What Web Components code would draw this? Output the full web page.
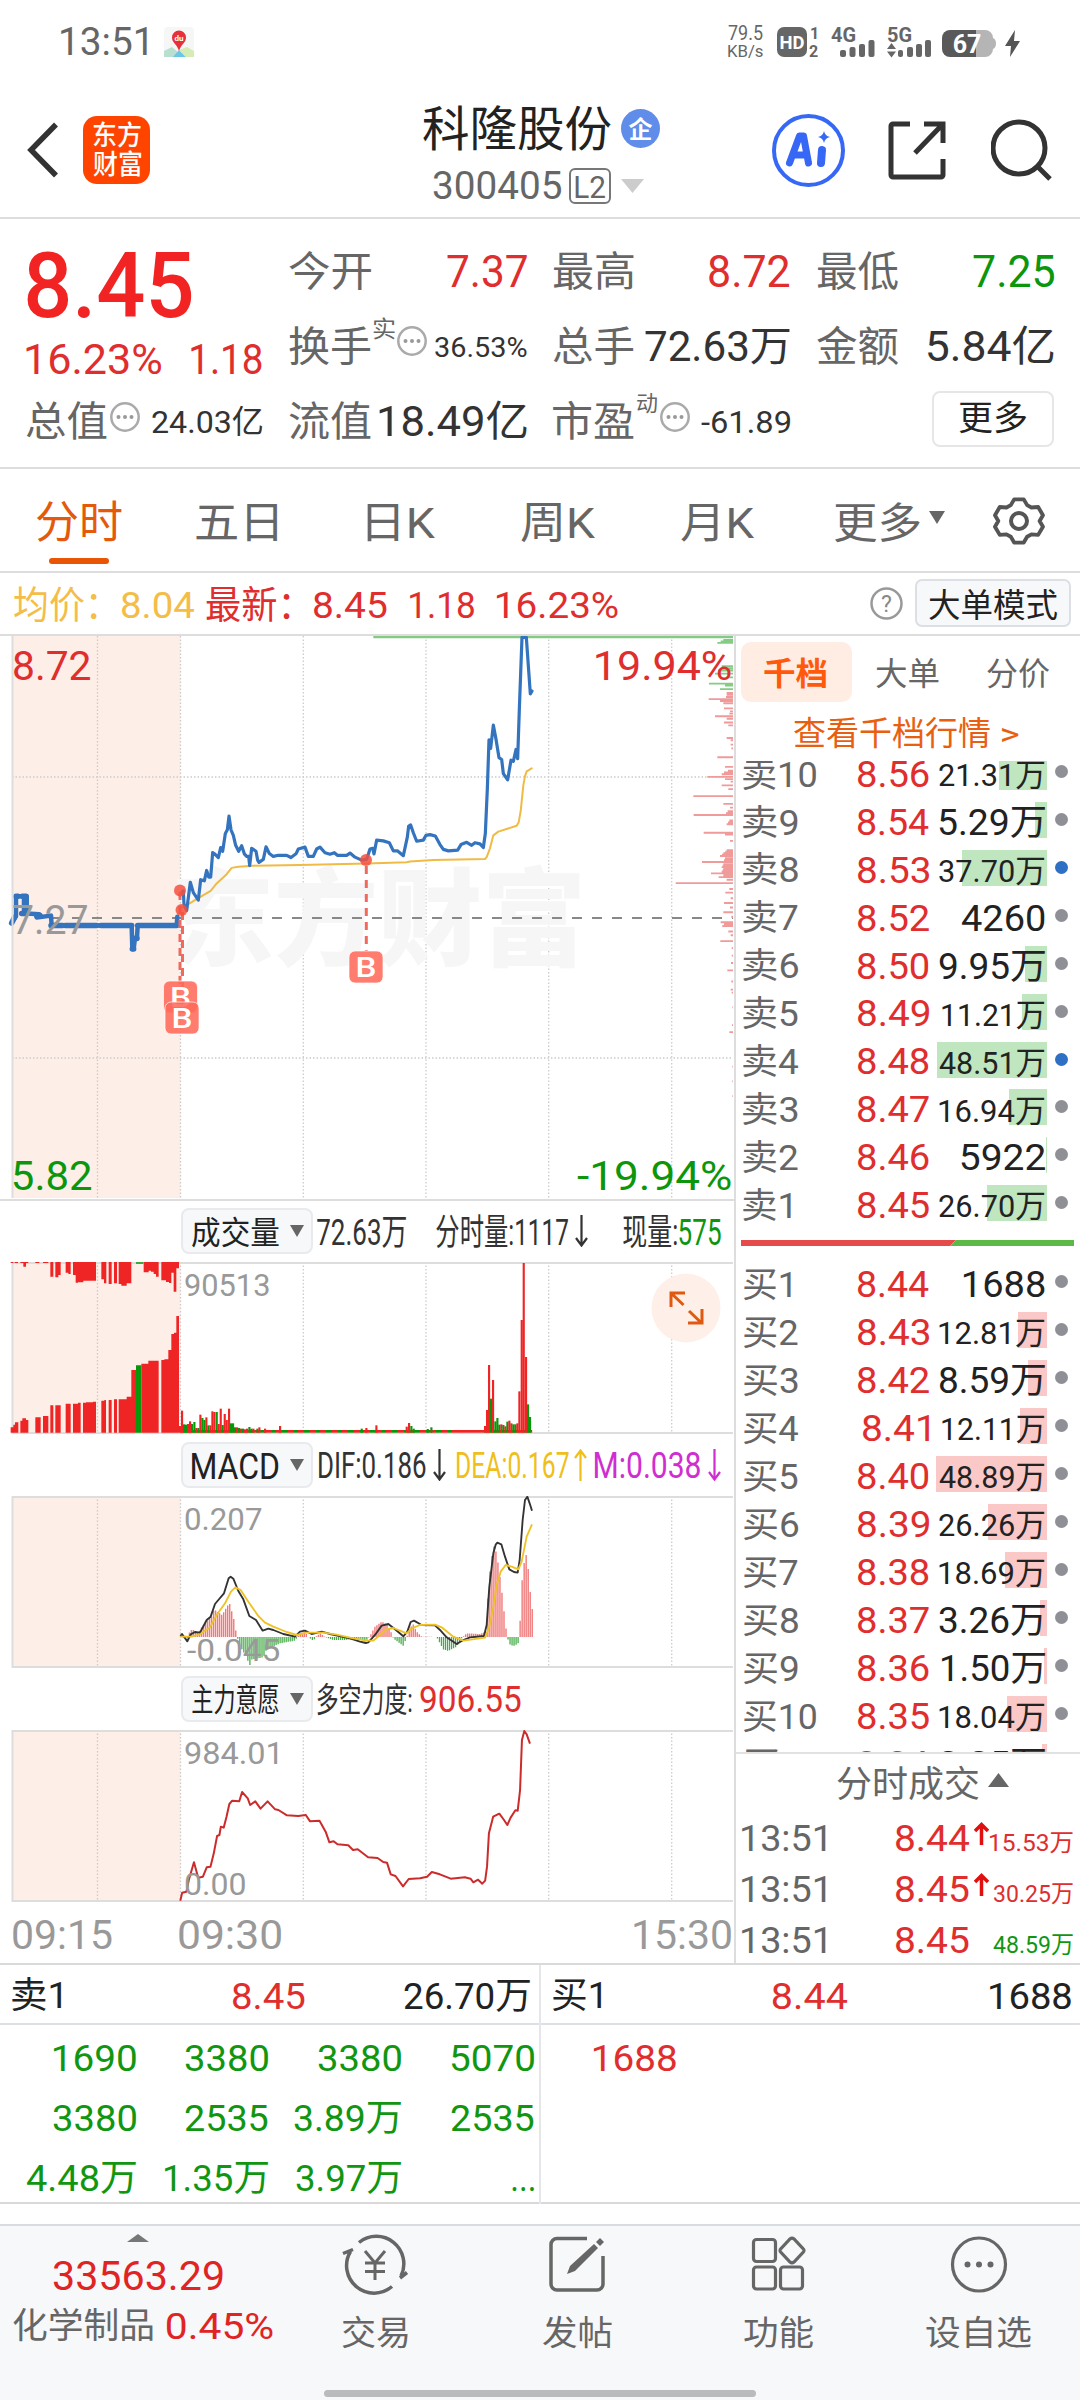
<!DOCTYPE html>
<html lang="zh-CN">
<head>
<meta charset="utf-8">
<title>科隆股份 300405</title>
<style>
html,body{margin:0;padding:0;background:#fff}
body{width:1080px;height:2400px;overflow:hidden;font-family:Roboto,"Noto Sans CJK SC",sans-serif;color:#333}
</style>
</head>
<body>
<stock-app></stock-app>
<script>
const FONT = 'Roboto,"Noto Sans CJK SC",sans-serif';
const RED = '#e02d2d', GREEN = '#119611', GREY = '#666';
const BASE = ':host{display:block;box-sizing:border-box}*{box-sizing:border-box}svg{display:block;flex:none}.r{display:flex;align-items:center}';

function define(name, css, html) {
  customElements.define(name, class extends HTMLElement {
    constructor() { super(); this.attachShadow({ mode: 'open' }); }
    connectedCallback() {
      this.shadowRoot.innerHTML = `<style>${BASE}${css}</style>${typeof html === 'function' ? html(this) : html}`;
    }
  });
}

/* Text whose inked width is set by the w attribute. */
const ctx = document.createElement('canvas').getContext('2d');
customElements.define('fit-text', class extends HTMLElement {
  constructor() { super(); this.attachShadow({ mode: 'open' }); }
  connectedCallback() {
    const w = +this.getAttribute('w'), s = +this.getAttribute('s'), b = this.getAttribute('b') || 400;
    ctx.font = `${b} ${s}px ${FONT}`;
    const m = ctx.measureText(this.textContent);
    const ink = m.actualBoundingBoxLeft + m.actualBoundingBoxRight;
    const k = w / ink;
    this.shadowRoot.innerHTML = `<style>:host{display:block;flex:none;width:${w}px;height:${s * 1.2}px;line-height:${s * 1.2}px;font-size:${s}px;font-weight:${b};color:${this.getAttribute('c') || 'inherit'};white-space:nowrap}
      span{display:inline-block;transform-origin:0 0;transform:translate(${m.actualBoundingBoxLeft * k}px,var(--drop,1px)) scaleX(${k})}</style><span><slot></slot></span>`;
  }
});
const T = (t, w, s, c = '', x = '', b = 400) => `<fit-text w="${w}" s="${s}" c="${c}" b="${b}" style="${x}">${t}</fit-text>`;

define('status-bar', ':host{height:84px;display:flex;align-items:center;padding-left:61px}.net{margin-left:534px;display:flex;flex-direction:column;gap:1px;height:36px;justify-content:center}', `
${T('13:51', 86, 38, GREY)}
<svg style="margin-left:17px" width="30" height="30" viewBox="0 0 30 30"><rect width="30" height="30" rx="4" fill="#f5f7f6"/><path d="M0 24L8 20 15 26 10 30H0z" fill="#b8dfd0"/><path d="M9 30l6-7 7 7z" fill="#6bc6e8"/><path d="M15 23l8-3 7 4v6h-8z" fill="#d5ecb6"/><path d="M15 24C13 17 8 16 8 10.500a7 7 0 0 1 14 0C22 16 17 17 15 24z" fill="#e8303a"/><text x="15" y="14" font-size="8" font-weight="700" fill="#fff" text-anchor="middle">du</text></svg>
<div class="net">${T('79.5', 35, 19.5, GREY, 'height:17px;line-height:17px')}${T('KB/s', 35, 16.5, GREY, 'height:17px;--drop:0px')}</div>
<svg style="margin-left:14px" width="244" height="36" viewBox="777 24 244 36" font-weight="700">
<rect x="777" y="27" width="30" height="30" rx="7" fill="#666"/><text x="792" y="49" font-size="19" fill="#fff" text-anchor="middle" textLength="25" lengthAdjust="spacingAndGlyphs">HD</text>
<g fill="#666"><text x="810" y="39" font-size="16" textLength="9">1</text><text x="809" y="57" font-size="16" textLength="11">2</text>
<text x="831" y="42" font-size="20" textLength="25" lengthAdjust="spacingAndGlyphs">4G</text><text x="887" y="42" font-size="20" textLength="25" lengthAdjust="spacingAndGlyphs">5G</text>
<rect x="840" y="50" width="6" height="7" rx="2"/><rect x="849.500" y="47" width="6" height="10" rx="2"/><rect x="859" y="44" width="6" height="13" rx="2"/><rect x="868.500" y="40" width="6" height="17" rx="2"/>
<path d="M887 49l4.500-6 4.500 6zM887 51.500h9l-4.500 6z"/><rect x="898" y="50" width="5" height="7" rx="2"/><rect x="907" y="47" width="6" height="10" rx="2"/><rect x="916" y="44" width="6" height="13" rx="2"/><rect x="925" y="40" width="6" height="17" rx="2"/></g>
<path d="M976 30h9a8 8 0 0 1 8 8v0c4 1 4 10 0 11a8 8 0 0 1-8 8h-9z" fill="#b5b5b5"/><path d="M950 30h26v27h-26a8 8 0 0 1-8-8V38a8 8 0 0 1 8-8z" fill="#595959"/><text x="967" y="52.500" font-size="25" fill="#fff" text-anchor="middle">67</text>
<path d="M1015 30l-10 16h6l-1 11 10-16h-6z" fill="#555"/></svg>`);

define('app-header', ':host{height:135px;display:flex;align-items:center;padding-left:27px;border-bottom:2px solid #ddd}.logo{margin-left:25px;width:67px;height:68px;border-radius:14px;background:#ff4400;display:flex;flex-direction:column;align-items:center;justify-content:center;gap:0}.ti{margin-left:273px;width:236px;height:100%}.l2{margin-left:8px;width:42px;height:36px;border:2px solid #777;border-radius:6px;display:flex;align-items:center;justify-content:center}', `
<svg width="31" height="56" viewBox="0 0 31 56" fill="none" stroke="#333" stroke-width="5.500"><path d="M29 2.500L4 28l25 25.500"/></svg>
<div class="logo">${T('东方', 48, 27, '#fff', 'height:29px;line-height:29px', 500)}${T('财富', 48, 27, '#fff', 'height:29px;line-height:29px', 500)}</div>
<div class="ti"><div class="r" style="height:86px;padding-top:3px">${T('科隆股份', 188, 48, '#222')}
<svg style="margin-left:10px" width="39" height="39" viewBox="0 0 39 39"><circle cx="19.500" cy="19.500" r="19.500" fill="#5f8de9"/><text x="19.500" y="28.500" font-size="24" font-weight="700" fill="#fff" text-anchor="middle">企</text></svg></div>
<div class="r" style="height:32px;padding-left:10px">${T('300405', 128, 38, GREY)}<div class="l2">${T('L2', 30, 32, GREY)}</div><svg style="margin-left:10px" width="23" height="14"><path d="M0 0h23L11.500 14z" fill="#ccc"/></svg></div></div>
<svg style="margin-left:113px" width="73" height="73" viewBox="0 0 73 73"><circle cx="36.500" cy="36.500" r="34.500" fill="none" stroke="#3668f5" stroke-width="4"/><path d="M17.500 49L27.500 22h4l5 27M22 41h12.500" fill="none" stroke="#3668f5" stroke-width="7" stroke-linejoin="round" stroke-linecap="round"/><path d="M50 36l-1 13" stroke="#3668f5" stroke-width="8" stroke-linecap="round"/><path d="M52 17q1 5 6 6-5 1-6 6-1-5-6-6 5-1 6-6z" fill="#3668f5"/></svg>
<svg style="margin-left:43px" width="58" height="60" viewBox="0 0 58 60" fill="none" stroke="#333" stroke-width="5"><path d="M22 4H5a2 2 0 0 0-2 2v49a2 2 0 0 0 2 2h48a2 2 0 0 0 2-2V39M36 4h19v19M54 5L27 33"/></svg>
<svg style="margin-left:45px" width="61" height="62" viewBox="0 0 61 62" fill="none" stroke="#333" stroke-width="5"><circle cx="28" cy="29" r="26"/><path d="M46 47l13 13"/></svg>`);

define('info-dot', ':host{flex:none}', `<svg width="30" height="30" viewBox="0 0 30 30"><circle cx="15" cy="15" r="13.700" fill="none" stroke="#aaa" stroke-width="2.500"/><g fill="#999"><circle cx="8.500" cy="15" r="2"/><circle cx="15" cy="15" r="2"/><circle cx="21.500" cy="15" r="2"/></g></svg>`);

define('quote-summary', `:host{--drop:1.500px;height:250px;border-bottom:2px solid #ddd;padding:14px 0 0 26px;display:grid;grid-template-columns:236px 238px 237px 240px;column-gap:26.500px}
.row{display:flex;align-items:center;height:75px}.sp{justify-content:space-between}.btn{width:125px;height:56px;border:2px solid #e6e6e6;border-radius:8px;display:flex;align-items:center;justify-content:center;margin:-3px 0 0 115px}.cell{display:flex;align-items:center}`, `
<div><div class="row" style="height:103px">${T('8.45', 165, 91, '#f22323', 'margin-left:1px', 500)}</div>
<div class="row sp" style="height:44px">${T('16.23%', 135, 42, RED)}${T('1.18', 71, 42, RED)}</div>
<div class="row sp" style="height:81px"><div class="cell">${T('总值', 81, 41, GREY)}<info-dot style="margin:-7px 0 0 3px"></info-dot></div>${T('24.03亿', 110, 32, '#333')}</div></div>
<div><div class="row sp">${T('今开', 82, 41, GREY)}${T('7.37', 80, 44, RED)}</div>
<div class="row sp"><div class="cell">${T('换手', 82, 41, GREY)}${T('实', 22, 23, GREY, 'margin:0 2px 36px 2px')}<info-dot style="margin-top:-8px"></info-dot></div>${T('36.53%', 92, 28, '#333')}</div>
<div class="row sp">${T('流值', 82, 41, GREY)}${T('18.49亿', 148, 42, '#333')}</div></div>
<div><div class="row sp">${T('最高', 81, 41, GREY)}${T('8.72', 81, 44, RED)}</div>
<div class="row sp">${T('总手', 81, 41, GREY)}${T('72.63万', 145, 42, '#333')}</div>
<div class="row sp"><div class="cell">${T('市盈', 81, 41, GREY)}${T('动', 20, 22, GREY, 'margin:0 3px 36px 3px')}<info-dot style="margin-top:-7px"></info-dot></div>${T('-61.89', 89, 32, '#333')}</div></div>
<div style="width:237px"><div class="row sp">${T('最低', 81, 41, GREY)}${T('7.25', 81, 44, '#0c960c')}</div>
<div class="row sp">${T('金额', 81, 41, GREY)}${T('5.84亿', 126, 42, '#333')}</div>
<div class="row"><div class="btn">${T('更多', 68, 34, '#222', '--drop:0px')}</div></div></div>`);

define('period-tabs', `:host{--drop:3px;height:104px;border-bottom:2px solid #ddd;display:flex;align-items:center;padding-left:36px;padding-top:2px}.on{position:relative}.on i{position:absolute;left:13px;bottom:-17px;width:60px;height:6px;border-radius:3px;background:#e85505}`, `
<div class="on">${T('分时', 86, 44, '#e35a0c')}<i></i></div>
${T('五日', 81, 43, GREY, 'margin-left:74px')}${T('日K', 68, 43, GREY, 'margin-left:90px')}${T('周K', 74, 43, GREY, 'margin-left:86px')}${T('月K', 73, 43, GREY, 'margin-left:86px')}${T('更多', 86, 42, GREY, 'margin-left:80px')}
<svg style="margin:-6px 0 0 9px" width="16" height="13"><path d="M0 0h16L8 13z" fill="#666"/></svg>
<svg style="margin-left:48px" width="52" height="52" viewBox="0 0 52 52" fill="none" stroke="#555" stroke-width="4" stroke-linejoin="round"><path d="M21 3.500h10l3.500 6 4.500 2.500 7-.5L51 20l-3.500 6L51 32l-5 8.500-7-.5-4.500 2.500-3.500 6H21l-3.500-6L13 40l-7 .5L1 32l3.500-6L1 20l5-8.500 7 .5 4.500-2.500z" transform="translate(1 1) scale(.96)"/><circle cx="26" cy="26" r="8"/></svg>`);

define('average-line', `:host{--drop:3px;height:63px;border-bottom:2px solid #ddd;display:flex;align-items:center;padding-left:14px}.btn{margin-left:12px;width:156px;height:48px;border:2px solid #dcdfe4;border-radius:7px;background:#f7f8fa;display:flex;align-items:center;justify-content:center}`, `
${T('均价：', 83, 38, '#f3bd48')}${T('8.04', 72, 37, '#f3bd48', 'margin-left:25px')}
${T('最新：', 84, 38, RED, 'margin-left:12px')}${T('8.45', 73, 37, RED, 'margin-left:24px')}${T('1.18', 64, 37, RED, 'margin-left:23px')}${T('16.23%', 121, 37, RED, 'margin-left:23px')}
<svg style="margin-left:252px" width="33" height="33" viewBox="0 0 33 33"><circle cx="16.500" cy="16.500" r="15" fill="none" stroke="#999" stroke-width="2.500"/><text x="16.500" y="24.500" font-size="23" fill="#888" text-anchor="middle">?</text></svg>
<div class="btn">${T('大单模式', 128, 33, '#222')}</div>`);

/* ---- charts ---- */
const GRID_X = [97.5, 303.3, 426, 548.7, 671.7];
const grid = (y, h) => `<rect x="12" y="${y}" width="168.500" height="${h}" fill="#fdeee7"/>
<g stroke="#ccc" stroke-width="1.300" stroke-dasharray="1.500 2">${[...GRID_X, 180.5].map(x => `<path d="M${x} ${y}v${h}"/>`).join('')}</g>`;
const frame = (y, h) => `<path d="M12 ${y + 1}H733M12 ${y + h - 1}H733M12.500 ${y}v${h}" stroke="#ddd" stroke-width="2" fill="none"/>`;
const CHART = ':host{position:relative;width:734px}fit-text,expand-button{position:absolute}';
const bars = (list, base, w) => list.map(([x, y, c]) => `<rect x="${x}" y="${Math.min(y, base)}" width="${w}" height="${Math.abs(base - y)}" fill="${c ? '#0a960a' : '#ef2424'}"/>`).join('');

const DEPTH_G = [27,1090,31,1082,35,1072,98,1085,104,1088,110,1075,118,1065,128,1100,145,1047,150,1095,160,1080];
const DEPTH_R = [170,1100,175,1100,181,1098,187,1046,192,1080,198,1090,212,1092,220,1110,226,1108,233,1065,240,1100,250,1092,258,1105,292,1100,298,1112,310,1112,320,1114,344,1072,370,1095,380,1104,385,1092,390,1085,397,1042,403,1095,410,1112,420,1085,430,1105,449,1000,470,1090,480,1110,490,1103,495,1098,500,1001,515,1108,520,1104,525,1100,548,1031,553,1095,570,1110,595,1100,599,1096,603,1090,607,1086,611,1080,617,1095,622,1092,627,1026,633,1090,637,1088,641,1085,645,1090,649,1088,653,1085,658,1053,663,1090,668,1076,675,1100,684,947,700,1108,710,1096,725,1112,738,1092,750,1110,763,1090,775,1114,790,1082,795,1092,800,1087,815,1105,825,1112,841,1081,860,1115,880,1115,900,1113,920,1102,950,1114,972,1112,980,1115,1020,1117,1068,1116,1087,1108,1180,1117,1220,1117,1260,1117];
const depth = (a, c) => { let s = ''; for (let i = 0; i < a.length; i += 2) s += `M${a[i + 1]} ${a[i]}H1119`; return `<path d="${s}" stroke="${c}" stroke-width="5"/>`; };
const badge = (x, y) => `<g><rect x="${x}" y="${y}" width="34" height="32" rx="6" fill="#ff6a5a" fill-opacity=".88" stroke="#fff" stroke-opacity=".7"/><text x="${x + 17}" y="${y + 26}" font-size="27" font-weight="500" fill="#fff" text-anchor="middle" textLength="21" lengthAdjust="spacingAndGlyphs">B</text></g>`;

define('price-chart', CHART + ':host{height:563px}', `
<svg width="734" height="563" viewBox="0 636 734 563">${grid(636, 562)}
<path d="M12 777H733M12 1058H733" stroke="#ccc" stroke-width="1.300" stroke-dasharray="1.500 2"/>
<text x="170" y="957" font-size="106" font-weight="900" fill="#f6f6f6" textLength="416" lengthAdjust="spacingAndGlyphs">东方财富</text>
<path d="M52 918H733" stroke="#888" stroke-width="2" stroke-dasharray="10 10"/>
<g transform="translate(360 630) scale(.33333 .36996)"><path d="M40 19H1119" stroke="#84c984" stroke-width="7"/>${depth(DEPTH_G, '#84cb84')}${depth(DEPTH_R, '#f19a9a')}</g>
<g transform="translate(0 630) scale(.33333 .36996)" fill="none" stroke-linejoin="round" stroke-linecap="round">
<path vector-effect="non-scaling-stroke" stroke="#f0bb45" stroke-width="2" d="M548 750L570 738 600 722 632 705 650 685 680 660 695 643 715 640 760 637 900 635 1100 631 1220 628 1230 626 1300 622 1455 619 1460 614 1470 590 1480 555 1495 545 1550 529 1556 520 1562 490 1570 420 1575 395 1580 382 1595 374"/>
<path vector-effect="non-scaling-stroke" stroke="#3474bf" stroke-width="4.500" d="M35 792L48 774V720H72V766H66M80 720V766L118 768 110 777 153 772 155 799H395L397 862H401L405 832H411L413 799H530L532 775"/>
<path vector-effect="non-scaling-stroke" stroke="#3474bf" stroke-width="5.500" d="M35 792L44 776M48 720H54M67 720H78V766H65M110 772H120M153 799H188M196 799H290M303 799H395M397 862H401M405 834H411M413 799H530"/>
<path vector-effect="non-scaling-stroke" stroke="#3474bf" stroke-width="3.200" d="M540 715L550 705 552 742 560 758 571 682 580 710 595 730 602 675 613 678 620 650 626 668 632 668 638 602 644 605 655 615 662 588 668 598 676 550 682 540 687 503 693 540 700 555 707 582 716 598 725 583 733 605 740 612 746 612 749 637 755 590 768 598 773 622 777 628 790 620 798 586 808 604 820 612 835 609 860 609 873 615 888 605 895 592 915 587 925 612 940 612 950 592 960 587 975 602 990 606 1003 602 1012 609 1040 609 1050 603 1065 614 1085 622 1100 620 1110 592 1118 590 1122 605 1130 568 1150 570 1168 575 1180 597 1192 597 1210 610 1222 560 1226 530 1232 527 1240 548 1250 571 1270 568 1278 555 1290 553 1306 557 1320 580 1330 593 1345 597 1373 595 1383 580 1400 574 1415 582 1425 575 1440 578 1450 588 1456 550 1462 430 1467 297 1472 320 1480 257 1488 295 1497 345 1505 350 1510 388 1523 405 1533 352 1540 355 1548 323 1553 348 1558 215 1566 20H1579L1591 173 1596 165"/></g>
<g stroke="#ef6a5d" stroke-width="3" stroke-dasharray="8 6"><path d="M180 892V984M182.500 912V1004M366.300 866V951"/></g>
<g fill="#f4503f" fill-opacity=".85"><circle cx="180" cy="890.500" r="6"/><circle cx="181.500" cy="910" r="6"/><circle cx="366" cy="860" r="6"/></g>
${badge(163.5, 981)}${badge(165, 1002)}${badge(349, 951)}
<path d="M12.500 636V1198" stroke="#ddd" stroke-width="2"/></svg>
${T('8.72', 76, 40, RED, 'left:14px;top:6px')}${T('19.94%', 135, 40, RED, 'left:596px;top:6px')}
${T('7.27', 74, 40, '#999', 'left:13px;top:260px')}
${T('5.82', 77, 40, '#0c960c', 'left:14px;top:516px')}${T('-19.94%', 154, 40, '#0c960c', 'left:577px;top:516px')}`);

define('indicator-bar', `:host{--drop:2px;height:62px;display:flex;align-items:center;padding-left:181px}.btn{width:132px;height:46px;border:2px solid #e8eaed;border-radius:8px;background:#f7f8fa;display:flex;align-items:center;justify-content:space-between;padding:0 7px 0 9px;margin-right:4px}`,
  el => `<div class="btn">${T(el.getAttribute('name'), 87, +el.getAttribute('s'), '#222')}<svg width="14" height="12"><path d="M0 0h14L7 12z" fill="#666"/></svg></div><slot></slot>`);
define('trend-arrow', ':host{flex:none}', el => {
  const up = el.hasAttribute('up');
  return `<svg width="13" height="32" viewBox="0 0 13 32" fill="none" stroke="${el.getAttribute('c')}" stroke-width="2.200"><path d="${up ? 'M6.500 32V1.500M1 9l5.500-7.500L12 9' : 'M6.500 0V30.500M1 23l5.500 7.500L12 23'}"/></svg>`;
});
define('expand-button', '', `<svg width="70" height="70" viewBox="0 0 70 70"><circle cx="35" cy="35" r="34.500" fill="#feefe8"/><g fill="none" stroke="#df5a10" stroke-width="3"><path d="M20 34V20H34M20.500 20.500L32.500 32M38 38L50.500 50M51 36V50H37"/></g></svg>`);

const AUCTION = [32,40,712,40,45,704,45,55,697,61,67,692,67,78,685,78,85,690,106,122,682,129,145,678,151,160,646,166,182,646,197,212,641,219,234,641,234,242,638,249,258,638,258,279,637,279,288,635,304,313,632,313,318,630,326,335,630,342,351,628,356,380,628,380,394,620,394,408,540,424,445,521,445,476,512,484,493,510,493,505,508,505,514,480,514,522,432,522,529,428,529,537,378];
const UNMATCHED = [32,40,219,44,54,219,61,85,219,70,78,230,106,118,219,129,145,219,151,160,260,166,175,262,175,182,255,197,205,248,205,212,252,219,227,255,227,234,278,234,250,277,250,288,272,304,312,268,312,319,280,326,335,282,342,351,280,356,364,282,364,380,287,380,394,280,431,446,247,446,453,242,453,461,245,461,468,252,468,476,260,484,498,271,498,507,276,507,514,279,514,521,248,521,529,305,529,537,235];
const triple = (a, base) => { let s = ''; for (let i = 0; i < a.length; i += 3) s += `M${a[i]} ${base}V${a[i + 2]}H${a[i + 1]}V${base}z`; return `<path d="${s}" fill="#ef2424"/>`; };
const MINUTE = [[537,708],[543,662],[549,703,1],[555,704,1],[561,702],[567,694],[573,702,1],[580,696,1],[586,714],[592,714,1],[598,674],[604,684,1],[610,690,1],[616,682],[622,706,1],[628,706],[634,664],[640,666],[647,666,1],[653,702],[659,656],[665,705,1],[671,672],[677,690],[684,656],[690,700,1],[696,700,1],[702,712,1],[708,712],[714,714,1],[720,716],[726,716,1],[732,718],[738,716],[745,711,1],[751,716,1],[757,716],[769,716,1],[775,712],[792,716],[837,708],[1082,716,1],[1096,714],[1126,706],[1217,710],[1224,699],[1231,708,1],[1238,716,1],[1280,717,1],[1291,712,1],[1452,708],[1458,660],[1464,525],[1470,626,1],[1476,570],[1483,694,1],[1489,684,1],[1495,704,1],[1501,703],[1507,705,1],[1513,709],[1519,695,1],[1525,692],[1531,700],[1537,703,1],[1543,703,1],[1549,700],[1555,604],[1562,390],[1568,219],[1575,501],[1581,643,1],[1587,681,1]];
let strip = '';
for (let x = 540; x < 1596; x += 6) strip += `<rect x="${x}" y="720" width="6.500" height="8" fill="${(x * 7 % 11 < 5 && !(x > 1350 && x < 1450)) ? '#0a960a' : '#ef2424'}"/>`;
define('volume-chart', CHART + ':host{height:172px}', `
<svg width="734" height="172" viewBox="0 1262 734 172">${grid(1262, 171)}${frame(1262, 172)}
<g transform="translate(0 1190) scale(.33333)">${triple(AUCTION, 728)}${triple(UNMATCHED, 216)}<path d="M408 728V526H424V728zM408 217H430V221H408z" fill="#0a960a"/>${strip}${bars(MINUTE, 728, 6.4)}</g></svg>
${T('90513', 84, 31, '#999', 'left:185px;top:4px')}<expand-button style="left:651px;top:11px"></expand-button>`);

const HIST = [541,1332,552,1345,564,1345,570,1320,580,1320,594,1330,606,1310,624,1290,636,1278,642,1258,666,1275,688,1238,700,1280,708,1325,712,1341,718,1365,742,1405,748,1430,756,1408,790,1402,800,1378,840,1360,885,1352,892,1341,900,1330,915,1326,925,1341,940,1352,950,1338,962,1330,975,1341,1000,1350,1030,1350,1085,1346,1095,1355,1105,1345,1110,1338,1125,1310,1145,1295,1160,1303,1175,1330,1180,1345,1210,1368,1220,1341,1238,1300,1250,1325,1265,1340,1310,1341,1330,1378,1345,1383,1370,1370,1385,1345,1400,1330,1440,1332,1458,1325,1467,1165,1480,1065,1490,1090,1504,1190,1517,1310,1523,1341,1526,1362,1540,1368,1554,1362,1557,1341,1560,1300,1567,1160,1577,1085,1584,1130,1591,1210,1598,1268];
let up = '', down = '';
for (let x = 544, i = 0; x <= 1598; x += 6.05) {
  while (i < HIST.length - 4 && HIST[i + 2] < x) i += 2;
  const y = HIST[i + 1] + (HIST[i + 3] - HIST[i + 1]) * (x - HIST[i]) / (HIST[i + 2] - HIST[i]);
  if (y < 1341) up += `M${x.toFixed(1)} 1341V${y.toFixed(1)}`; else down += `M${x.toFixed(1)} 1341V${y.toFixed(1)}`;
}
define('macd-chart', CHART + ':host{height:172px}', `
<svg width="734" height="172" viewBox="0 1496 734 172">${grid(1496, 171)}${frame(1496, 172)}
<g transform="translate(0 1190) scale(.33333)" fill="none" stroke-linejoin="round"><path d="${up}" stroke="#f07a7a" stroke-width="4.200"/><path d="${down}" stroke="#43ab47" stroke-width="3.800"/>
<path stroke="#333" stroke-width="5.600" d="M541 1338L546 1332 562 1354 572 1333 585 1326 600 1328 620 1290 632 1280 645 1242 655 1230 672 1210 686 1165 692 1160 700 1166 715 1203 730 1228 748 1278 768 1290 788 1322 805 1316 820 1320 850 1332 885 1340 900 1325 915 1322 935 1332 965 1325 990 1332 1050 1345 1080 1355 1097 1359 1105 1357 1125 1335 1145 1307 1165 1302 1185 1318 1210 1339 1222 1325 1232 1296 1242 1292 1265 1305 1305 1306 1320 1320 1340 1342 1370 1362 1390 1350 1410 1342 1452 1338 1460 1305 1468 1190 1480 1090 1487 1064 1492 1058 1504 1063 1515 1100 1528 1138 1542 1146 1553 1148 1559 1110 1568 990 1575 930 1582 920 1589 940 1596 962"/>
<path stroke="#efc224" stroke-width="5.600" d="M541 1340L575 1340 600 1333 630 1312 650 1275 675 1240 693 1205 706 1192 722 1200 745 1235 775 1278 795 1298 820 1310 860 1326 890 1335 920 1328 970 1328 1010 1334 1060 1345 1100 1352 1120 1352 1140 1335 1160 1318 1180 1314 1200 1322 1220 1330 1235 1315 1260 1305 1305 1304 1325 1312 1360 1340 1390 1352 1455 1343 1468 1310 1480 1250 1490 1185 1502 1145 1517 1125 1535 1130 1555 1138 1565 1115 1580 1040 1596 1003"/></g></svg>
${T('0.207', 77, 31, '#999', 'left:185px;top:4px')}${T('-0.045', 93, 31, '#999', 'left:187px;top:135px')}`);

define('force-chart', CHART + ':host{height:172px}', `
<svg width="734" height="172" viewBox="0 1730 734 172">${grid(1730, 171)}${frame(1730, 172)}
<g transform="translate(0 1690) scale(.47193 .33333)"><path vector-effect="non-scaling-stroke" fill="none" stroke="#cc2b2b" stroke-width="2" stroke-linejoin="round" d="M382 632L386 608 395 605 400 570 411 517 420 563 430 560 438 532 446 530 453 490 460 438 465 435 468 410 474 413 480 380 486 342 492 332 507 334 513 306 525 325 530 345 541 334 552 356 567 334 583 358 590 360 608 376 632 378 648 375 657 394 677 392 690 425 698 457 707 454 715 463 738 466 748 480 758 478 780 502 800 504 812 516 820 518 828 553 838 558 854 589 866 567 890 565 905 560 915 546 932 553 955 566 985 562 997 566 1003 577 1013 569 1022 581 1028 572 1032 530 1036 430 1045 380 1058 371 1068 390 1075 405 1082 383 1092 361 1097 362 1102 300 1106 150 1111 123 1116 133 1123 161"/></g></svg>
${T('984.01', 93, 31, '#999', 'left:185px;top:4px')}${T('0.00', 60, 31, '#999', 'left:185px;top:135px')}`);

define('chart-column', ':host{width:734px}.axis{--drop:4px;display:flex;align-items:center;height:60px;padding-left:13px}', `
<price-chart></price-chart>
<indicator-bar name="成交量" s="32" style="height:63px;border-top:2px solid #ddd">${T('72.63万', 89, 36, '#333')}${T('分时量:1117', 132, 36, '#333', 'margin-left:30px')}<trend-arrow c="#333" style="margin-left:7px"></trend-arrow>${T('现量:', 54, 36, '#333', 'margin-left:35px')}${T('575', 42, 37, '#0c960c', 'margin-left:2px')}</indicator-bar>
<volume-chart></volume-chart>
<indicator-bar name="MACD" s="37">${T('DIF:0.186', 107, 37, '#333', 'margin-left:2px')}<trend-arrow c="#333" style="margin-left:7px"></trend-arrow>${T('DEA:0.167', 112, 37, '#efbf1c', 'margin-left:11px')}<trend-arrow up c="#efbf1c" style="margin-left:5px"></trend-arrow>${T('M:0.038', 105, 37, '#cf2ed0', 'margin-left:8px')}<trend-arrow c="#cf2ed0" style="margin-left:8px"></trend-arrow></indicator-bar>
<macd-chart></macd-chart>
<indicator-bar name="主力意愿" s="32">${T('多空力度:', 95, 34, '#333')}${T('906.55', 101, 37, RED, 'margin-left:8px')}</indicator-bar>
<force-chart></force-chart>
<div class="axis">${T('09:15', 99, 41, '#999')}${T('09:30', 102, 41, '#999', 'margin-left:67px')}${T('15:30', 97, 41, '#999', 'margin-left:353px')}</div>`);

/* ---- order book ---- */
define('order-row', `:host{display:grid;grid-template-columns:120px 66px 118px;height:47.900px;align-items:center;padding-left:7px;position:relative}
.p{display:flex;justify-content:flex-end}.q{position:relative;display:flex;justify-content:flex-end;height:100%;align-items:center;padding-right:2px}.q i{position:absolute;right:0;top:3.500px;height:36px}.q fit-text{position:relative}.d{position:absolute;left:318.500px;top:14.500px;width:13px;height:13px;border-radius:50%}`, el => {
  const [n, p, q, w, blue] = el.getAttribute('data').split(',');
  const width = { '1.50万': 103, '11.21万': 103, '12.11万': 103, '1688': 81 }[q] || (q.length > 4 ? 106 : 84);
  const sell = n[0] === '卖';
  return `${T(n, n.length > 2 ? 73 : n[1] === '1' ? 48 : 55, 35, GREY)}<div class="p">${T(p, p === '8.41' ? 67 : 72, 36, RED)}</div>
<div class="q"><i style="width:${w}px;background:${sell ? '#bfe6bf' : '#fbc8c8'}"></i>${T(q, width, q.length === 6 ? 32 : 36, '#222')}</div><b class="d" style="background:${blue ? '#2f6fc4' : '#8f8f96'}"></b>`;
});
define('side-tabs', ':host{--drop:3px;display:flex;align-items:center;padding:6px 0 0 5px}.on{width:111px;height:60px;border-radius:10px;background:#ffede4;display:flex;align-items:center;justify-content:center}', `
<div class="on">${T('千档', 63, 32, '#ff5a0c', 'margin-right:2px', 700)}</div>${T('大单', 63, 32, GREY, 'margin-left:24px')}${T('分价', 63, 32, GREY, 'margin-left:48px')}`);
const rows = a => a.map(d => `<order-row data="${d}"></order-row>`).join('');
define('trade-row', ':host{--drop:4px;display:flex;align-items:center;height:51px;padding-left:6px;width:337px}.v{margin-left:auto;padding-top:8px}', el => {
  const [p, arrow, q, w, c] = el.getAttribute('data').split(',');
  return `${T('13:51', 84, 37, GREY)}${T(p, 73, 37, RED, 'margin-left:70px')}${arrow ? '<svg style="margin:-3px 0 0 5px" width="15" height="23" viewBox="0 0 15 23" fill="none" stroke="#e01010" stroke-width="3.500"><path d="M7.500 23V3M1 9l6.500-6.500L14 9"/></svg>' : ''}<div class="v">${T(q, w, 24, c)}</div>`;
});
define('order-book', `:host{border-left:2px solid #ddd;width:346px}.link{--drop:3px;display:flex;align-items:center;height:59px;padding-left:58px}.asks{height:479px;overflow:hidden}.asks>div{margin-top:-10px}.bids{height:508px;overflow:hidden;padding-top:15px;border-bottom:2px solid #e2e2e2}.bids order-row{height:48px}.bar{margin-left:5px;width:333px;height:6px;display:block}.tt{--drop:4px;display:flex;align-items:center;height:56px;padding-left:101px}`, `
<side-tabs></side-tabs>
<div class="link">${T('查看千档行情', 196, 33, '#e8600f')}${T('&gt;', 17, 32, '#e8600f', 'margin-left:12px')}</div>
<div class="asks"><div>${rows(['卖10,8.56,21.31万,48', '卖9,8.54,5.29万,12', '卖8,8.53,37.70万,85,1', '卖7,8.52,4260,0', '卖6,8.50,9.95万,22', '卖5,8.49,11.21万,25', '卖4,8.48,48.51万,110,1', '卖3,8.47,16.94万,38', '卖2,8.46,5922,1', '卖1,8.45,26.70万,60'])}</div></div>
<svg class="bar" viewBox="0 0 333 6"><path d="M0 0H215L209 6H0z" fill="#e54b4b"/><path d="M215 0H333V6H209z" fill="#5cb946"/></svg>
<div class="bids">${rows(['买1,8.44,1688,0', '买2,8.43,12.81万,29', '买3,8.42,8.59万,19', '买4,8.41,12.11万,27', '买5,8.40,48.89万,111', '买6,8.39,26.26万,59', '买7,8.38,18.69万,42', '买8,8.37,3.26万,7', '买9,8.36,1.50万,3', '买10,8.35,18.04万,40', '买11,8.34,2.25万,5'])}</div>
<div class="tt">${T('分时成交', 142, 36, GREY)}<svg style="margin:-4px 0 0 9px" width="21" height="14"><path d="M0 14h21L10.500 0z" fill="#666"/></svg></div>
<trade-row data="8.44,1,15.53万,83,${RED}"></trade-row><trade-row data="8.45,1,30.25万,79,${RED}"></trade-row><trade-row data="8.45,,48.59万,80,${GREEN}"></trade-row>`);

/* ---- order queues ---- */
define('queue-panel', `:host{--drop:2.500px;display:grid;grid-template-columns:541px 539px;height:241px;border-top:2px solid #d9d9d9;border-bottom:2px solid #d9d9d9}.h{height:60px;border-bottom:2px solid #dcdfe3;display:flex;align-items:center;padding-left:12px}.sell{border-right:2px solid #e4e6ea}.g{display:grid;grid-template-columns:repeat(4,132.700px);grid-auto-rows:60px;padding-left:3px;align-items:center;justify-items:end;padding-top:1px}`, `
<div class="sell"><div class="h">${T('卖1', 49, 36, '#222')}${T('8.45', 72, 37, RED, 'margin-left:172px')}${T('26.70万', 126, 37, '#222', 'margin-left:99px')}</div>
<div class="g">${[['1690', 82], ['3380', 83], ['3380', 83], ['5070', 83], ['3380', 83], ['2535', 83], ['3.89万', 107], ['2535', 83], ['4.48万', 110], ['1.35万', 103], ['3.97万', 105], ['...', 22]].map(([t, w]) => T(t, w, 37, GREEN)).join('')}</div></div>
<div class="buy"><div class="h" style="padding-left:11px">${T('买1', 49, 36, '#222')}${T('8.44', 74, 37, RED, 'margin-left:172px')}${T('1688', 81, 37, '#222', 'margin-left:143px')}</div><div class="g" style="padding-left:2px">${T('1688', 82, 37, RED)}</div></div>`);

define('nav-item', ':host{display:flex;flex-direction:column;align-items:center;width:202px;padding-top:9px}', el => `<slot></slot>${T(el.getAttribute('label'), +el.getAttribute('w'), 34, GREY, 'margin-top:17px')}`);
define('bottom-nav', ':host{height:176px;background:#f7f8fa;border-top:2px solid #d8dbe0;position:relative}.row{display:flex}.row svg{overflow:visible}.idx{width:274px;padding-left:13px}.home{position:absolute;left:324px;top:164px;width:432px;height:7px;border-radius:4px;background:#b9bbbd}', `
<div class="row"><div class="idx"><svg style="margin:8px 0 0 114px" width="22" height="8"><path d="M0 8h22L11 0z" fill="#777"/></svg>
${T('33563.29', 170, 41, '#e02424', 'margin:9px 0 0 40px')}<div class="r" style="margin-top:4px">${T('化学制品', 140, 35, GREY)}${T('0.45%', 106, 37, '#e02424', 'margin-left:14px')}</div></div>
<nav-item label="交易" w="66"><svg width="66" height="60" viewBox="0 0 66 60" fill="none" stroke="#666" stroke-width="3.500"><path d="M17 7.500A27.500 27.500 0 0 1 59 41M50 51.500A27.500 27.500 0 0 1 8.500 16.500M1 18.500l10-4M65 37.500l-7 5.500"/><path d="M23 16l10 12 10-12M33 28V45M23 28H43M23 36.500H43" stroke-width="3"/></svg></nav-item>
<nav-item label="发帖" w="69"><svg width="56" height="60" viewBox="0 0 56 60" fill="none" stroke="#666" stroke-width="3.500"><path d="M38 3.500H8a6 6 0 0 0-6 6V49a6 6 0 0 0 6 6H48a6 6 0 0 0 6-6V21"/><path d="M18 39l3-8L45 9l4 4L26 36z" fill="#666" stroke="none"/><path d="M47 7l4-4 4 4-4 4z" fill="#666" stroke="none"/></svg></nav-item>
<nav-item label="功能" w="69" style="width:200px"><svg width="54" height="60" viewBox="0 0 54 60" fill="none" stroke="#666" stroke-width="3.200"><rect x="2.500" y="4.500" width="22" height="22" rx="3"/><rect x="2.500" y="32" width="22" height="22" rx="3"/><rect x="29.500" y="32" width="22" height="22" rx="3"/><path d="M39 4a3 3 0 0 1 4 0l9 9.500a2.500 2.500 0 0 1 0 4L43 27a3 3 0 0 1-4 0l-9-9.500a2.500 2.500 0 0 1 0-4z"/></svg></nav-item>
<nav-item label="设自选" w="105" style="width:201px"><svg width="58" height="60" viewBox="0 0 58 60"><circle cx="29" cy="29.500" r="26.500" fill="none" stroke="#666" stroke-width="3.200"/><g fill="#666"><circle cx="17.500" cy="29.500" r="3"/><circle cx="29" cy="29.500" r="3"/><circle cx="40.500" cy="29.500" r="3"/></g></svg></nav-item></div>
<div class="home"></div>`);

define('stock-app', ':host{width:1080px;height:2400px;background:#fff;display:flex;flex-direction:column}.main{display:flex;height:1328px}.sp{height:20px;background:#fff}bottom-nav{flex:none}', `
<status-bar></status-bar><app-header></app-header><quote-summary></quote-summary><period-tabs></period-tabs><average-line></average-line>
<div class="main"><chart-column></chart-column><order-book></order-book></div>
<queue-panel></queue-panel><div class="sp"></div><bottom-nav></bottom-nav>`);
</script>
</body>
</html>
